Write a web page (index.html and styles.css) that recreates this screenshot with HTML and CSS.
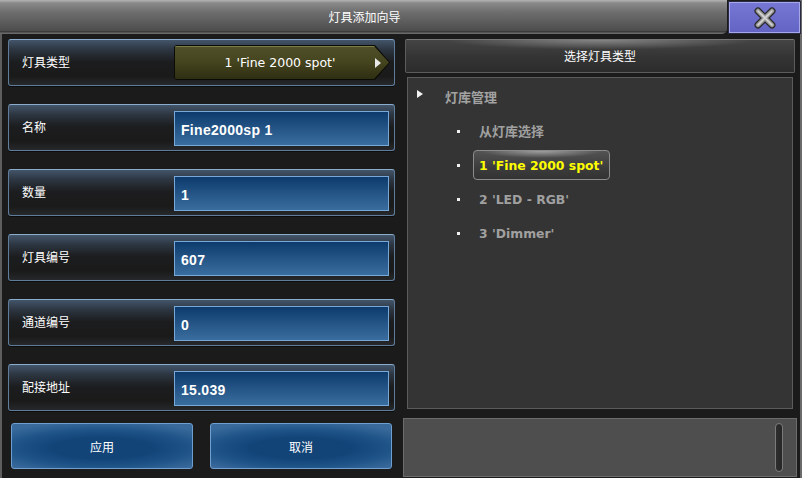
FILE: index.html
```html
<!DOCTYPE html>
<html lang="zh">
<head>
<meta charset="utf-8">
<link rel="stylesheet" href="styles.css">
</head>
<body>
<div class="window">
  <div class="titlebar">
    <div class="title">灯具添加向导</div>
    <div class="close">
      <svg width="32" height="22" viewBox="0 0 32 22">
        <g stroke-linecap="round">
          <path d="M9 4 L23 18 M23 4 L9 18" stroke="#2a2a2a" stroke-width="7"/>
          <path d="M9 4 L23 18 M23 4 L9 18" stroke="#9a9a9a" stroke-width="4.5"/>
          <path d="M9 4 L23 18 M23 4 L9 18" stroke="#d4d4d4" stroke-width="1.6"/>
        </g>
      </svg>
    </div>
  </div>
  <div class="main">
    <div class="left">
      <div class="row">
        <div class="label">灯具类型</div>
        <div class="dropdown"><div class="dropdown-inner"><span class="dd-text">1 'Fine 2000 spot'</span><span class="dd-arrow"></span></div></div>
      </div>
      <div class="row">
        <div class="label">名称</div>
        <div class="input">Fine2000sp 1</div>
      </div>
      <div class="row">
        <div class="label">数量</div>
        <div class="input">1</div>
      </div>
      <div class="row">
        <div class="label">灯具编号</div>
        <div class="input">607</div>
      </div>
      <div class="row">
        <div class="label">通道编号</div>
        <div class="input">0</div>
      </div>
      <div class="row">
        <div class="label">配接地址</div>
        <div class="input">15.039</div>
      </div>
      <div class="buttons">
        <div class="btn">应用</div>
        <div class="btn">取消</div>
      </div>
    </div>
    <div class="right">
      <div class="panel-head">选择灯具类型</div>
      <div class="tree">
        <div class="tree-root"><span class="tri"></span><span class="root-text">灯库管理</span></div>
        <div class="tree-item"><span class="bullet"></span><span class="item-text cjk">从灯库选择</span></div>
        <div class="tree-item"><span class="bullet"></span><span class="item-text selected">1 'Fine 2000 spot'</span></div>
        <div class="tree-item"><span class="bullet"></span><span class="item-text">2 'LED - RGB'</span></div>
        <div class="tree-item"><span class="bullet"></span><span class="item-text">3 'Dimmer'</span></div>
      </div>
      <div class="bottom-panel"><div class="scroll"></div></div>
    </div>
  </div>
</div>
</body>
</html>
```
FILE: styles.css
```css
* { box-sizing: border-box; }
html, body { margin: 0; padding: 0; }
body {
  width: 802px;
  height: 478px;
  background: #1b1b1b;
  font-family: "Noto Sans CJK SC", "DejaVu Sans", sans-serif;
  color: #fff;
  overflow: hidden;
}
.window {
  width: 802px;
  height: 478px;
  display: flex;
  flex-direction: column;
  border-left: 2px solid #5e5e5e;
  border-right: 2px solid #6a6a6a;
}
.titlebar {
  display: flex;
  height: 34px;
  flex: none;
}
.title {
  flex: 1;
  height: 34px;
  margin-left: -2px;
  background: linear-gradient(#b4b4b4 0px, #8a8a8a 3px, #6e6e6e 12px, #595959 24px, #4c4c4c 31px, #2c2c2c 32px, #7a7a7a 33px, #5a5a5a 34px);
  border-bottom-right-radius: 5px;
  display: flex;
  align-items: center;
  justify-content: center;
  font-size: 12px;
  padding-bottom: 1px;
  padding-left: 2px;
}
.close {
  width: 71px;
  height: 31px;
  margin: 2px 0 0 2px;
  background: linear-gradient(#7676d4, #6464c4);
  border: 1px solid #a6a6ea;
  outline: 1px solid #2a2a40;
  display: flex;
  align-items: center;
  justify-content: center;
}
.main {
  flex: 1;
  display: flex;
  padding-top: 5px;
}
.left {
  width: 393px;
  padding-left: 6px;
  display: flex;
  flex-direction: column;
  gap: 18px;
}
.row {
  height: 47px;
  flex: none;
  border: 1px solid #5f7d9b;
  border-top-color: #8aaccd;
  border-radius: 3px;
  background: linear-gradient(#43556a 0%, #2c3540 22%, #1c1d1f 48%, #1a1a1a 80%, #26282b 100%);
  box-shadow: 0 1px 0 #0c0c0c;
  display: flex;
  align-items: center;
  padding-left: 13px;
  padding-right: 5px;
}
.label {
  width: 152px;
  font-size: 12px;
  padding-bottom: 2px;
  flex: none;
}
.input {
  flex: 1;
  height: 35px;
  margin-top: 2px;
  background: linear-gradient(#0c3a6c, #245586 50%, #3a6d9f);
  border: 1px solid #78a8d8;
  font-family: "Liberation Sans", sans-serif;
  font-weight: bold;
  font-size: 14px;
  display: flex;
  align-items: center;
  padding: 3px 0 0 6px;
  letter-spacing: 0.3px;
}
.dropdown {
  flex: 1;
  height: 35px;
  margin-right: -1px;
  background: #0c0c06;
  padding: 1px;
  clip-path: polygon(0 2px, 2px 0, calc(100% - 15px) 0, 100% 50%, calc(100% - 15px) 100%, 2px 100%, 0 calc(100% - 2px));
}
.dropdown-inner {
  height: 100%;
  background: linear-gradient(#50502a, #44441f 50%, #2e2e12);
  box-shadow: inset 0 1px 0 #7c7c48;
  clip-path: polygon(0 1px, 1px 0, calc(100% - 15px) 0, 100% 50%, calc(100% - 15px) 100%, 1px 100%, 0 calc(100% - 1px));
  display: flex;
  align-items: center;
}
.dd-text {
  flex: 1;
  text-align: center;
  font-family: "DejaVu Sans", sans-serif;
  font-size: 12.5px;
  padding-left: 10px;
  padding-bottom: 1px;
}
.dd-arrow {
  width: 0;
  height: 0;
  border-top: 5px solid transparent;
  border-bottom: 5px solid transparent;
  border-left: 6px solid #e8e8e8;
  margin-right: 8px;
}
.buttons {
  display: flex;
  gap: 17px;
  padding-left: 3px;
  margin-top: -6px;
}
.btn {
  width: 182px;
  height: 46px;
  border: 1px solid #6e9fd0;
  border-radius: 3px;
  background: radial-gradient(ellipse 70% 60% at 50% 55%, #124478 40%, #1f5488 70%, #3a6a9c 100%);
  display: flex;
  align-items: center;
  justify-content: center;
  font-size: 12px;
}
.right {
  flex: 1;
  display: flex;
  flex-direction: column;
  padding-left: 8px;
  padding-right: 3px;
}
.panel-head {
  height: 34px;
  margin: 0 2px;
  border: 1px solid #5c5c5c;
  border-top-color: #777;
  border-radius: 2px;
  background:
    radial-gradient(ellipse 40% 30% at 50% 0%, rgba(255,255,255,0.35), rgba(255,255,255,0) 100%),
    linear-gradient(#444 0%, #353535 50%, #2c2c2c 100%);
  display: flex;
  align-items: center;
  justify-content: center;
  font-size: 12px;
  padding-bottom: 1px;
}
.tree {
  height: 332px;
  margin: 4px 4px 0 4px;
  background: #343434;
  border: 1px solid #5c5c5c;
  padding: 2px 0 0 9px;
  display: flex;
  flex-direction: column;
}
.tree-root {
  height: 34px;
  display: flex;
  align-items: center;
}
.tri {
  width: 0;
  height: 0;
  border-top: 4px solid transparent;
  border-bottom: 4px solid transparent;
  border-left: 6px solid #f4f4f4;
  margin-bottom: 6px;
}
.root-text {
  margin-left: 22px;
  color: #a2a2a2;
  font-weight: bold;
  font-size: 13px;
  padding-bottom: 2px;
}
.tree-item {
  height: 34px;
  display: flex;
  align-items: center;
  padding-left: 40px;
}
.bullet {
  width: 3px;
  height: 3px;
  background: #f0f0f0;
  flex: none;
}
.item-text {
  margin-left: 13px;
  color: #a0a0a0;
  font-weight: bold;
  font-size: 12.4px;
  font-family: "DejaVu Sans", sans-serif;
  padding: 0 6px 0 5px;
  height: 30px;
  display: flex;
  align-items: center;
  border: 1px solid transparent;
}
.item-text.cjk {
  font-family: "Noto Sans CJK SC", sans-serif;
  font-size: 13px;
  padding-bottom: 2px;
}
.item-text.selected {
  color: #ffff00;
  border-color: #8c8c8c;
  border-radius: 4px;
  background:
    radial-gradient(ellipse 45% 25% at 50% 0%, rgba(255,255,255,0.45), rgba(255,255,255,0)),
    linear-gradient(#535353, #3c3c3c 60%, #333);
}
.bottom-panel {
  height: 59px;
  margin-top: 9px;
  background: #4e4e4e;
  border: 1px solid #6c6c6c;
  display: flex;
  justify-content: flex-end;
  align-items: center;
  padding-right: 13px;
}
.scroll {
  width: 8px;
  height: 49px;
  border: 1px solid #7a7a7a;
  border-radius: 4px;
  background: linear-gradient(90deg, #2e2e2e, #262626);
}
```
